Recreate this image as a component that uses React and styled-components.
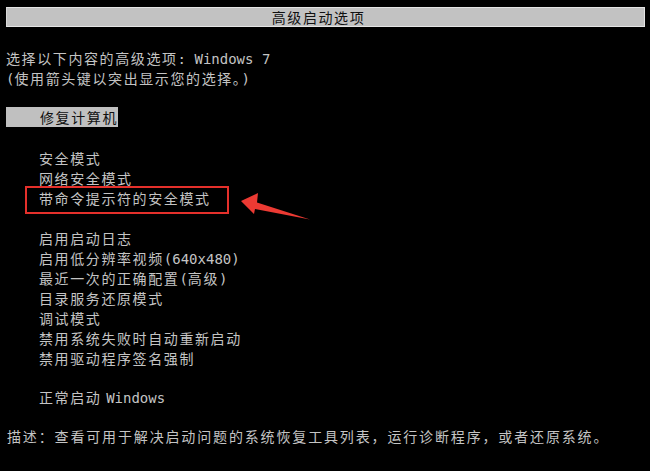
import React from "react";
import styled, { createGlobalStyle } from "styled-components";

const Global = createGlobalStyle`
  html, body { margin: 0; padding: 0; background: #000; }
  #root { width: 650px; height: 471px; }
`;

const Screen = styled.div`
  position: relative;
  width: 650px;
  height: 471px;
  box-sizing: border-box;
  background: #000;
  padding: 7px 5px 0 6px;
  color: #c4c4c4;
  font-family: "Noto Sans CJK SC", "Noto Sans", sans-serif;
  font-size: 14px;
  letter-spacing: 1.6px;
  overflow: hidden;
`;

const TitleBar = styled.div`
  height: 20px;
  box-sizing: border-box;
  background: #c2c2c2;
  border-top: 1px solid #e4e4e4;
  border-bottom: 1px solid #e4e4e4;
  border-left: 1px solid #d8d8d8;
  border-right: 1px solid #e4e4e4;
  color: #111;
  display: flex;
  align-items: center;
  justify-content: center;
  padding-right: 14px;
  line-height: 18px;
`;

const Line = styled.div`
  height: 20px;
  line-height: 20px;
  white-space: nowrap;
  margin-top: ${(p) => p.$gap || 0}px;
  padding-left: ${(p) => p.$indent || 0}px;
  letter-spacing: ${(p) => p.$spacing || 1.6}px;
`;

const Latin = styled.span`
  font-family: "DejaVu Sans Mono", "Liberation Mono", monospace;
  font-size: 14px;
  letter-spacing: 0;
`;

const Selected = styled.div`
  display: inline-block;
  height: 20px;
  line-height: 20px;
  margin-top: 19px;
  padding-left: 34px;
  background: #c0c0c0;
  color: #101010;
`;

const Menu = styled.div`
  display: flex;
  flex-direction: column;
  padding-left: 33px;
  margin-top: ${(p) => p.$gap || 0}px;
`;

const Item = styled.div`
  position: relative;
  height: 20px;
  line-height: 20px;
  white-space: nowrap;
`;

const Marker = styled.span`
  position: absolute;
  left: -14px;
  top: -2px;
  width: 204px;
  height: 28px;
  box-sizing: border-box;
  border: 2px solid #e5302b;
  pointer-events: none;
`;

const Arrow = styled.svg`
  position: absolute;
  left: 0;
  top: 0;
  pointer-events: none;
`;

export default function App() {
  return (
    <>
      <Global />
      <Screen>
        <TitleBar>高级启动选项</TitleBar>
        <Line $gap={21}>
          选择以下内容的高级选项<Latin>: Windows 7</Latin>
        </Line>
        <Line>
          <Latin>(</Latin>使用箭头键以突出显示您的选择。<Latin>)</Latin>
        </Line>
        <Selected>修复计算机</Selected>
        <Menu $gap={21}>
          <Item>安全模式</Item>
          <Item>网络安全模式</Item>
          <Item>
            带命令提示符的安全模式
            <Marker />
          </Item>
        </Menu>
        <Menu $gap={20}>
          <Item>启用启动日志</Item>
          <Item>
            启用低分辨率视频<Latin>(640x480)</Latin>
          </Item>
          <Item>
            最近一次的正确配置<Latin>(</Latin>高级<Latin>)</Latin>
          </Item>
          <Item>目录服务还原模式</Item>
          <Item>调试模式</Item>
          <Item>禁用系统失败时自动重新启动</Item>
          <Item>禁用驱动程序签名强制</Item>
        </Menu>
        <Menu $gap={19}>
          <Item>
            正常启动 <Latin>Windows</Latin>
          </Item>
        </Menu>
        <Line $gap={19} $indent={1} $spacing={1.85}>
          描述：查看可用于解决启动问题的系统恢复工具列表，运行诊断程序，或者还原系统。
        </Line>
        <Arrow width="650" height="471" viewBox="0 0 650 471">
          <polygon
            points="241,201 258,193 257,202.5 310,219.5 255,209 254,214"
            fill="#ec3a33"
          />
        </Arrow>
      </Screen>
    </>
  );
}
